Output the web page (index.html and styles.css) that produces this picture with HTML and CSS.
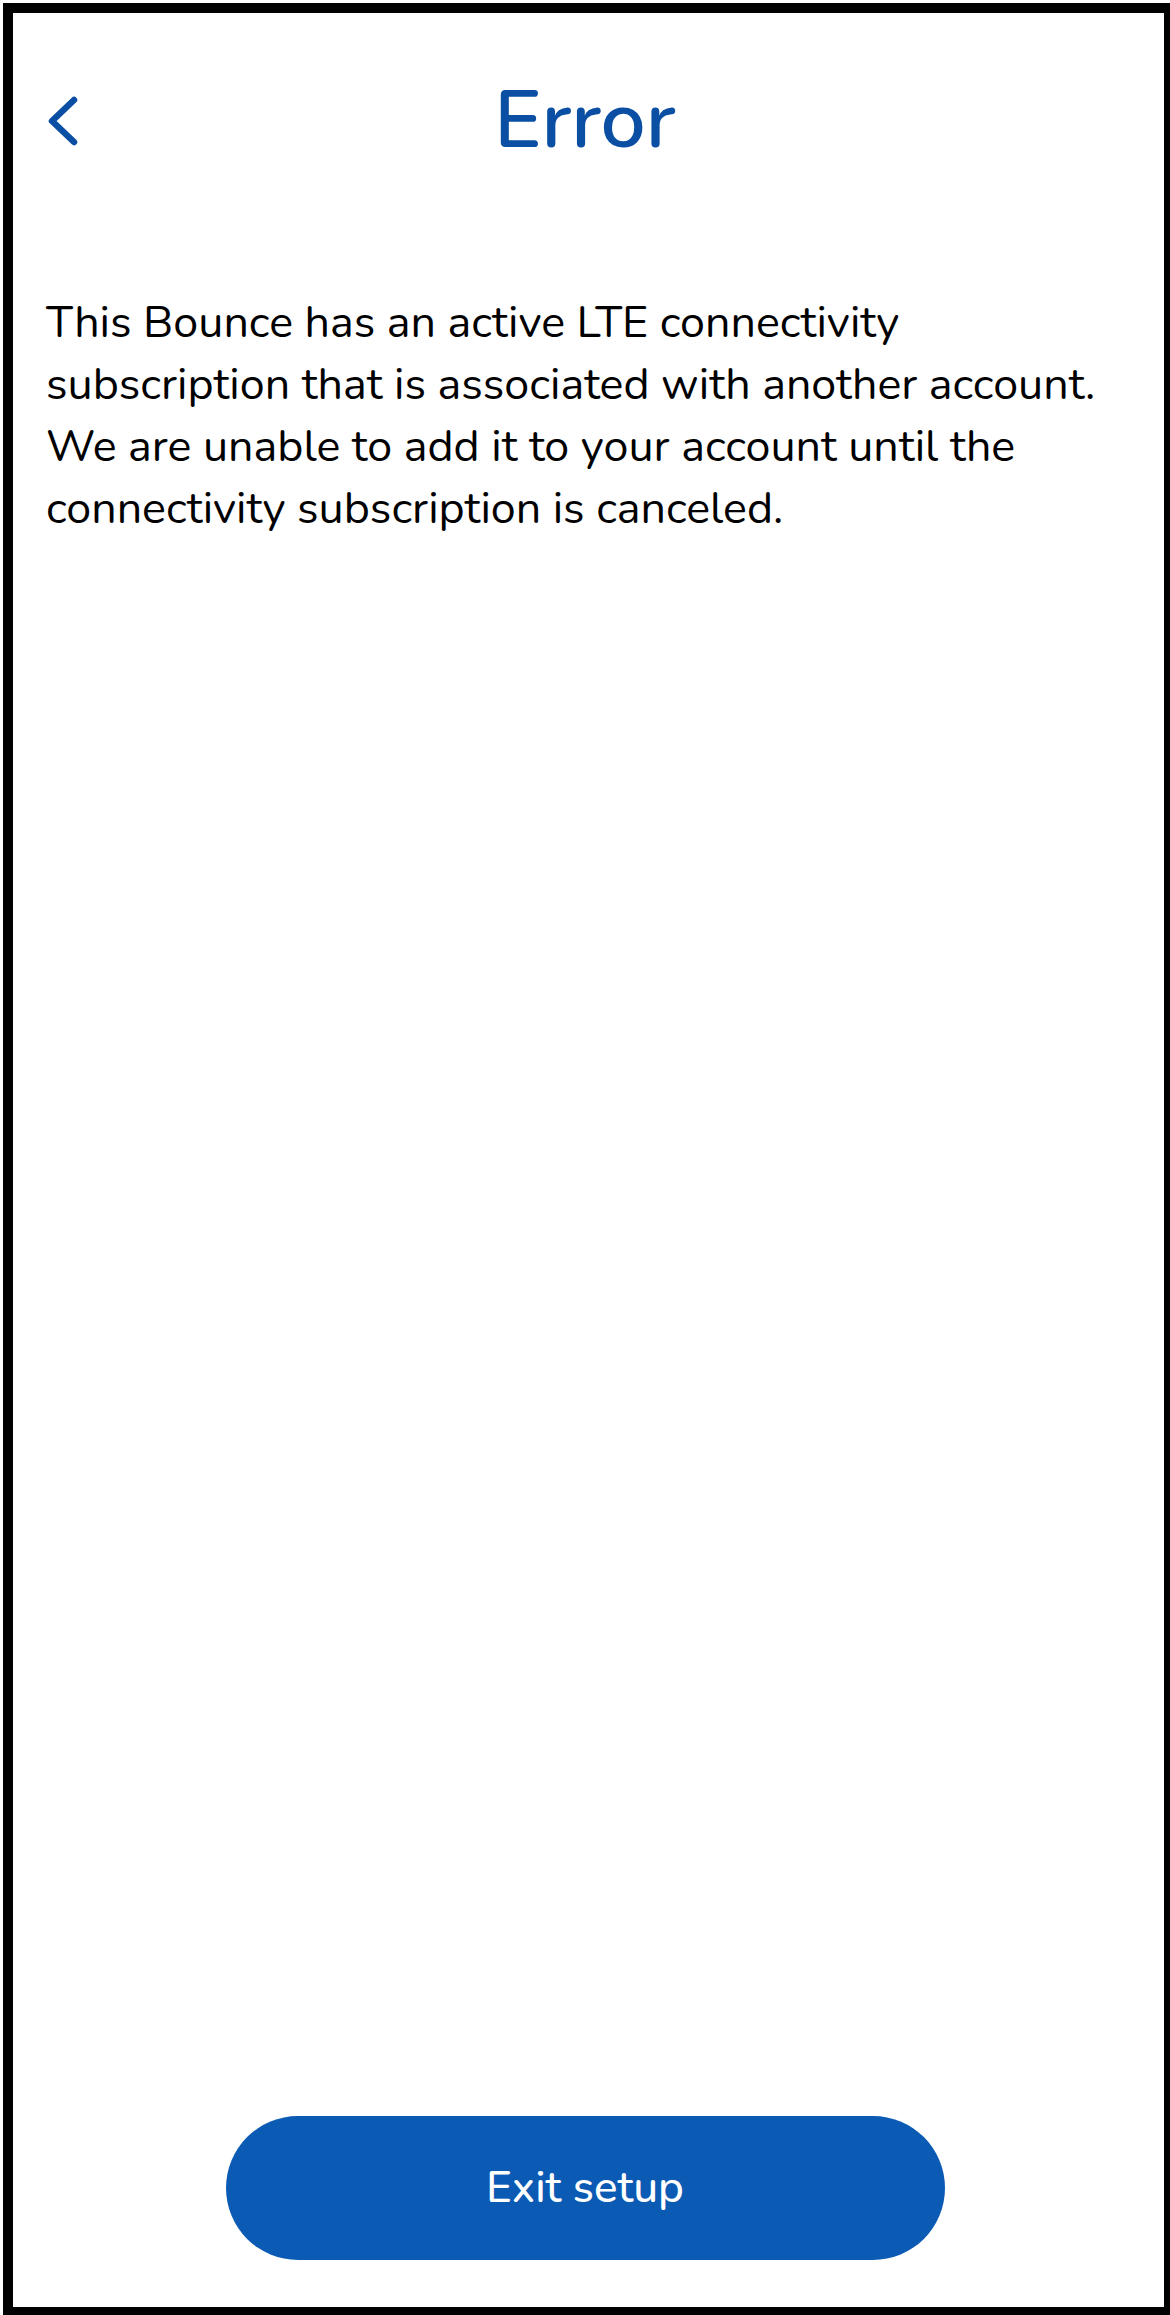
FILE: index.html
```html
<!DOCTYPE html>
<html lang="en">
<head>
<meta charset="utf-8">
<title>Error</title>
<link rel="stylesheet" href="styles.css">
</head>
<body>
<div class="frame">
  <header class="topbar">
    <button class="back" aria-label="Back">
      <svg width="36" height="54" viewBox="0 0 36 54" aria-hidden="true">
        <polyline points="29,6 7,27 29,48" fill="none" stroke="#0a4fa3" stroke-width="6.5" stroke-linecap="round" stroke-linejoin="round"/>
      </svg>
    </button>
    <h1 class="title">Error</h1>
    <span class="spacer"></span>
  </header>
  <p class="message">This Bounce has an active LTE connectivity<br>subscription that is associated with another account.<br>We are unable to add it to your account until the<br>connectivity subscription is canceled.</p>
  <div class="actions">
    <button class="exit">Exit setup</button>
  </div>
</div>
</body>
</html>
```
FILE: styles.css
```css
html, body {
  margin: 0;
  padding: 0;
  background: #fff;
  overflow: hidden;
}

.frame {
  box-sizing: border-box;
  margin: 3px 0 0 3px;
  width: 1171px;
  height: 2314px;
  border: 10px solid #000;
  background: #fff;
  display: flex;
  flex-direction: column;
  padding-right: 7px;
  font-family: "Nunito", "Lato", "Noto Sans", sans-serif;
}

.topbar {
  height: 216px;
  display: grid;
  grid-template-columns: 1fr auto 1fr;
  align-items: center;
}

.back {
  justify-self: start;
  margin-left: 32px;
  padding: 0;
  border: 0;
  background: none;
  width: 36px;
  height: 54px;
  display: flex;
}

.title {
  margin: 0;
  font-size: 80px;
  font-weight: 600;
  line-height: 96px;
  color: #0a4fa3;
}

.message {
  margin: 63px 0 0 33px;
  font-size: 44.8px;
  line-height: 62px;
  color: #000;
  font-weight: 400;
}

.actions {
  margin-top: auto;
  padding-bottom: 47px;
  display: flex;
  justify-content: center;
}

.exit {
  width: 719px;
  height: 144px;
  border: 0;
  border-radius: 72px;
  background: #0b5ab4;
  color: #fff;
  font-family: inherit;
  font-size: 44px;
  font-weight: 500;
  padding: 0;
}
```
